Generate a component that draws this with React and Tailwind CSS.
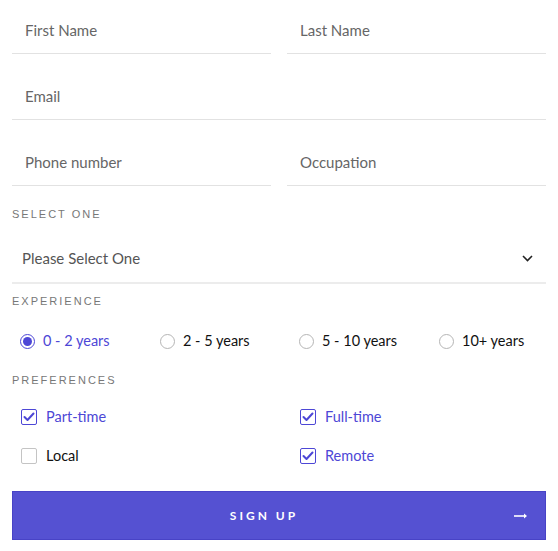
import React, { useState } from "react";

const font = { fontFamily: '"Lato", "Open Sans", sans-serif' };

const Field = ({ placeholder, className = "" }) => (
    <div className={`border-b border-[#e2e2e2] pt-[19px] pb-[12px] pl-[13px] ${className}`}>
        <input
            type="text"
            placeholder={placeholder}
            className="block h-[22px] w-full bg-transparent text-[15px] leading-[22px] text-[#555] placeholder-[#666] outline-none"
        />
    </div>
);

const Label = ({ children, className = "" }) => (
    <div
        className={`text-[11px] leading-[16px] tracking-[2px] text-[#777] ${className}`}
        style={{ fontFamily: '"Liberation Sans", Arial, sans-serif' }}
    >
        {children}
    </div>
);

const Radio = ({ label, checked, onClick }) => (
    <button type="button" onClick={onClick} className="flex items-center gap-[8px] h-[22px]">
        <span
            className={`flex h-[15px] w-[15px] items-center justify-center rounded-full border ${checked ? "border-[#4d47d6]" : "border-[#b5b5b5]"
                }`}
        >
            {checked && <span className="h-[9px] w-[9px] rounded-full bg-[#4d47d6]" />}
        </span>
        <span className={`text-[14.5px] ${checked ? "text-[#4d47d6]" : "text-[#111]"}`}>{label}</span>
    </button>
);

const Check = ({ label, checked, onClick }) => (
    <button type="button" onClick={onClick} className="flex items-center gap-[9px] pl-[9px] h-[22px]">
        <span
            className={`flex h-[16px] w-[16px] items-center justify-center rounded-[2px] border-[1.5px] ${checked ? "border-[#4d47d6]" : "border-[#c4c4c4]"
                }`}
        >
            {checked && (
                <svg width="12" height="10" viewBox="0 0 12 10" fill="none">
                    <path d="M1.5 5 L4.5 8 L10.5 1.5" stroke="#4d47d6" strokeWidth="2" strokeLinecap="round" strokeLinejoin="round" />
                </svg>
            )}
        </span>
        <span className={`text-[14.5px] ${checked ? "text-[#4d47d6]" : "text-[#111]"}`}>{label}</span>
    </button>
);

export default function App() {
    const [exp, setExp] = useState(0);
    const [prefs, setPrefs] = useState({ part: true, full: true, local: false, remote: true });

    const toggle = (k) => setPrefs((p) => ({ ...p, [k]: !p[k] }));

    const years = ["0 - 2 years", "2 - 5 years", "5 - 10 years", "10+ years"];

    return (
        <div className="w-[558px] h-[551px] bg-white px-[12px]" style={font}>
            {/* Tên và thông tin cơ bản */}
            <div className="grid grid-cols-2 gap-x-[16px]">
                <Field placeholder="First Name" />
                <Field placeholder="Last Name" />
            </div>
            <Field placeholder="Email" className="mt-[12px]" />
            <div className="grid grid-cols-2 gap-x-[16px] mt-[12px]">
                <Field placeholder="Phone number" />
                <Field placeholder="Occupation" />
            </div>

            {/* Select */}
            <Label className="mt-[20px]">SELECT ONE</Label>
            <div className="flex items-center justify-between border-b-2 border-[#ececec] pt-[25px] pb-[13px] pl-[10px] pr-[13px]">
                <span className="text-[15px] leading-[22px] text-[#555]">Please Select One</span>
                <svg width="11" height="7" viewBox="0 0 11 7" fill="none">
                    <path d="M1 1 L5.5 5.5 L10 1" stroke="#222" strokeWidth="1.6" />
                </svg>
            </div>

            {/* Kinh nghiệm */}
            <Label className="mt-[9px]">EXPERIENCE</Label>
            <div className="grid grid-cols-[140px_139px_140px_1fr] pl-[8px] mt-[21px]">
                {years.map((y, i) => (
                    <Radio key={y} label={y} checked={exp === i} onClick={() => setExp(i)} />
                ))}
            </div>

            {/* Preferences */}
            <Label className="mt-[20px]">PREFERENCES</Label>
            <div className="grid grid-cols-[279px_1fr] gap-y-[17px] mt-[18px]">
                <Check label="Part-time" checked={prefs.part} onClick={() => toggle("part")} />
                <Check label="Full-time" checked={prefs.full} onClick={() => toggle("full")} />
                <Check label="Local" checked={prefs.local} onClick={() => toggle("local")} />
                <Check label="Remote" checked={prefs.remote} onClick={() => toggle("remote")} />
            </div>

            {/* Button */}
            <button
                type="button"
                className="relative mt-[24px] flex h-[49px] w-full items-center justify-center border border-[#4843c6] bg-[#5551d2] pr-[30px] text-white"
            >
                <span className="text-[12px] font-bold tracking-[3px]">SIGN UP</span>
                <svg className="absolute right-[17px]" width="14" height="8" viewBox="0 0 14 8" fill="none">
                    <path d="M0 4 H12" stroke="white" strokeWidth="1.6" />
                    <path d="M10 1.5 L13 4 L10 6.5 Z" fill="white" />
                </svg>
            </button>
        </div>
    );
}
